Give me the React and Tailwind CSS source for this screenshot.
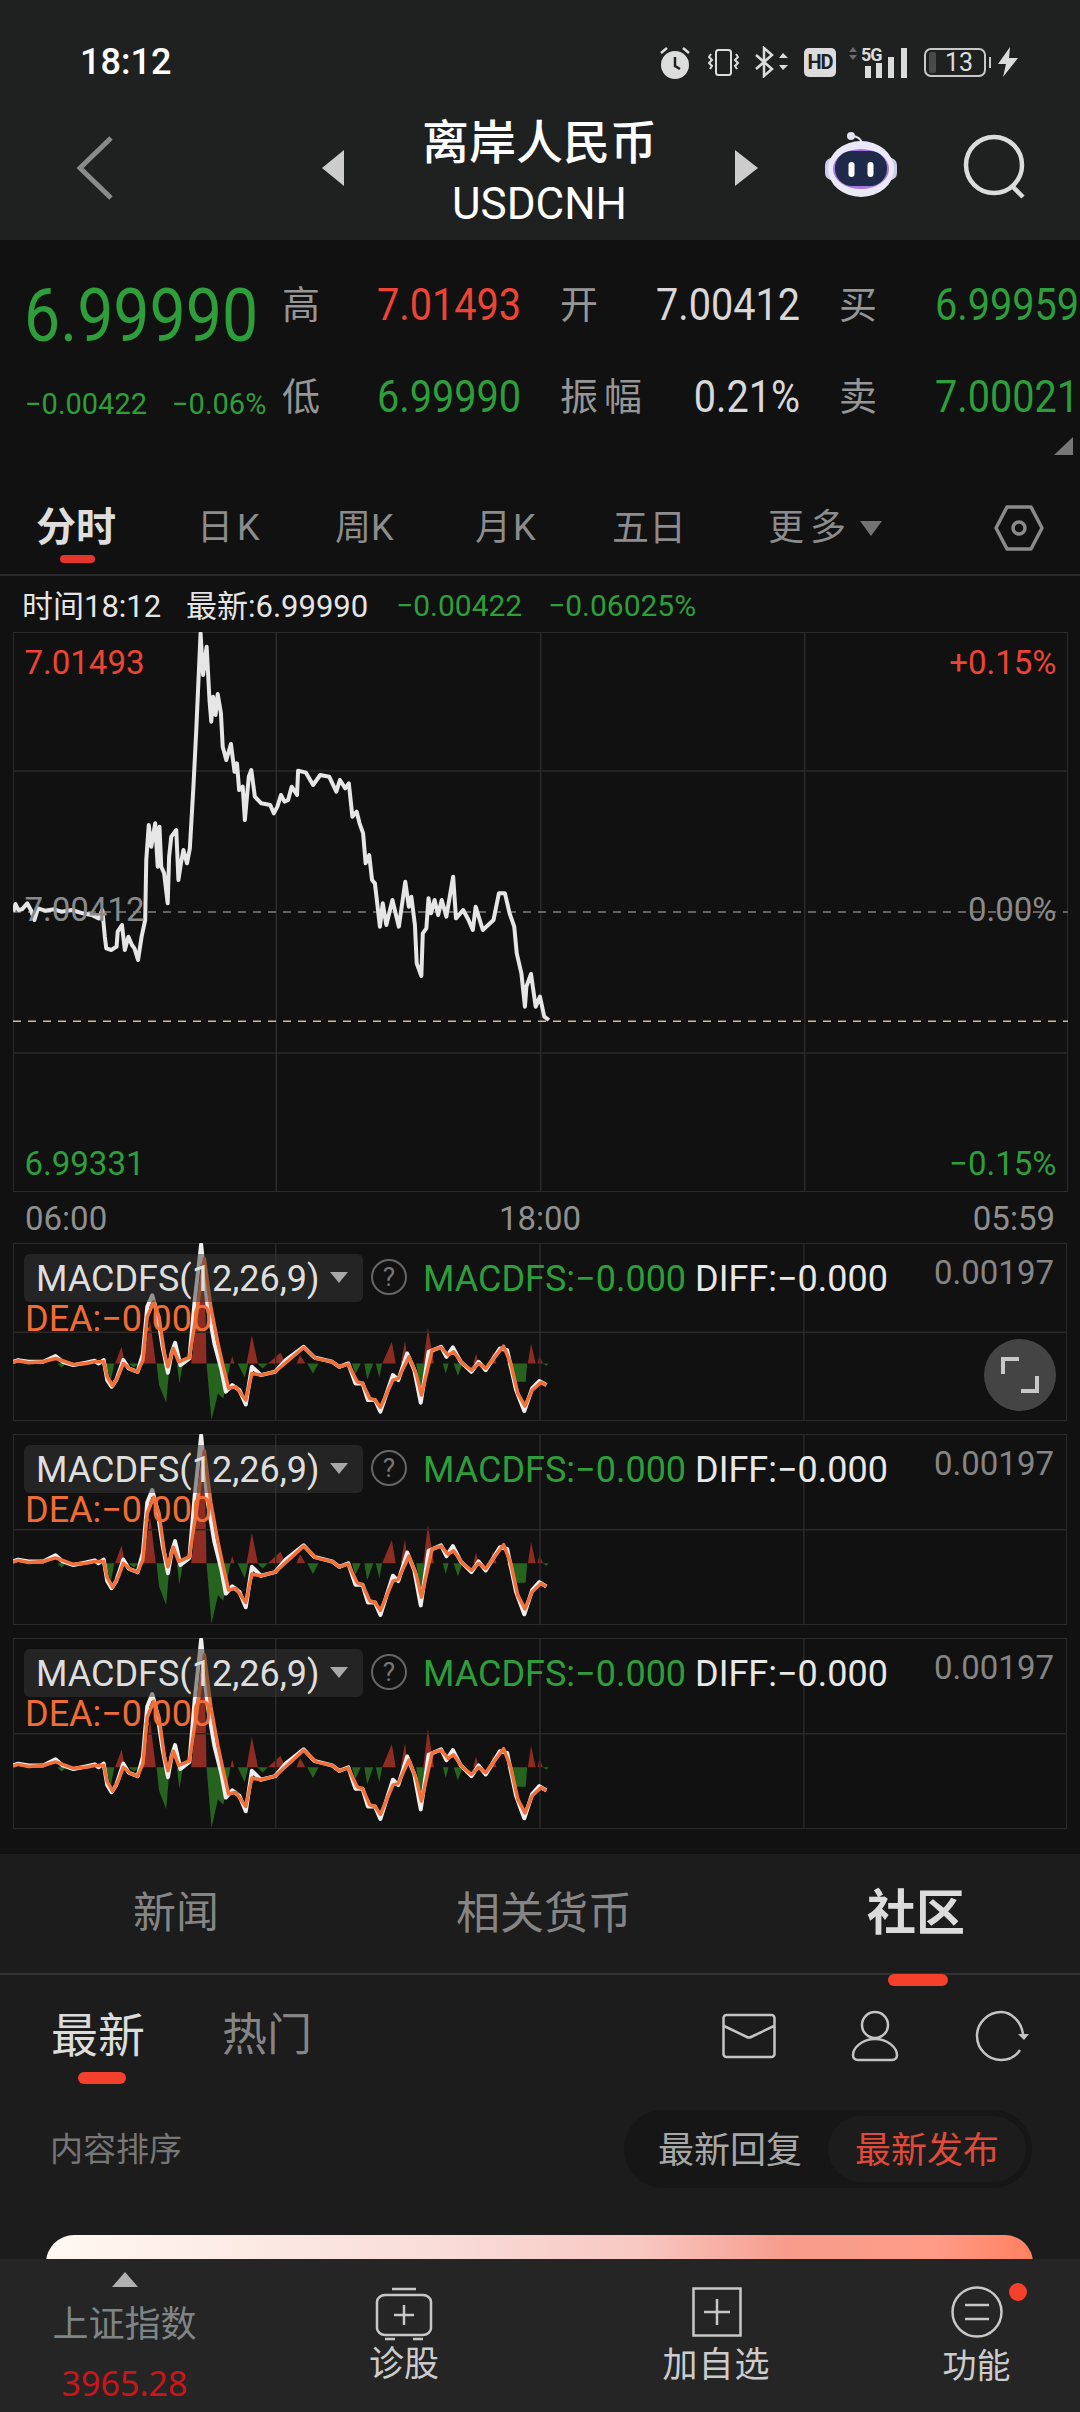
import React from 'react';

const FONT = "font-[Roboto,'Noto_Sans_CJK_SC',sans-serif]";

// traced from the reference, coordinates are 2.8x horizontally and 3x vertically
const PRICE_LINE = '36,875 42,852 50,870 60,868 75,850 85,870 95,900 105,865 125,872 150,868 170,875 200,870 230,880 255,885 275,895 285,870 292,950 296,985 310,990 325,980 328,935 340,915 348,990 358,950 368,975 375,985 385,1020 395,950 405,900 408,720 415,615 422,680 433,610 440,740 445,620 450,740 458,760 468,850 472,710 478,650 492,630 498,780 505,730 512,690 522,730 530,685 540,500 548,330 560,40 567,165 577,80 585,240 590,305 595,230 602,285 608,222 617,280 622,380 632,420 645,372 655,455 662,430 668,510 678,500 684,600 695,470 702,450 712,530 730,550 755,555 765,580 775,560 785,525 795,545 805,540 815,500 830,525 833,452 855,458 875,495 895,465 920,470 940,515 950,480 965,505 975,490 985,590 997,575 1005,610 1015,640 1022,730 1032,705 1040,780 1048,790 1062,920 1070,850 1080,915 1097,840 1115,920 1133,785 1143,860 1150,830 1160,915 1165,1030 1178,1068 1182,940 1192,925 1198,835 1205,880 1215,840 1225,885 1235,840 1248,890 1267,770 1275,895 1295,870 1310,900 1322,930 1330,860 1350,930 1380,900 1395,820 1412,820 1425,880 1438,920 1445,1000 1458,1060 1468,1160 1472,1100 1485,1062 1498,1160 1510,1130 1522,1190 1535,1200';
const MACD_WHITE = '36,425 50,420 80,425 120,425 155,408 175,425 205,435 240,428 265,422 275,430 290,420 300,480 312,500 325,480 345,420 360,445 385,455 400,400 412,260 426,225 440,280 455,380 470,458 480,400 490,368 505,435 530,415 545,240 563,72 580,250 600,370 620,450 632,515 650,495 670,510 688,553 705,440 730,465 770,455 800,420 850,380 880,412 930,425 950,440 975,430 995,490 1015,490 1030,540 1050,540 1065,575 1100,465 1115,480 1140,400 1160,450 1178,548 1200,395 1235,380 1250,410 1268,382 1290,425 1320,455 1340,425 1360,450 1400,385 1420,390 1445,510 1468,573 1490,505 1510,483 1530,495';
const MACD_ORANGE = '36,427 50,422 80,428 120,425 155,415 175,422 205,433 240,430 265,425 290,425 300,470 315,497 330,470 345,430 365,447 385,455 400,420 412,290 430,245 445,290 460,400 470,440 485,385 500,425 530,412 550,280 572,115 590,260 610,370 625,440 640,505 660,500 688,540 705,460 730,465 770,455 800,428 850,382 885,415 930,425 950,440 975,432 1000,485 1015,490 1035,535 1050,540 1065,562 1100,480 1115,475 1145,410 1165,460 1180,525 1210,390 1235,382 1255,405 1270,395 1295,430 1320,450 1340,430 1360,445 1410,378 1430,430 1450,520 1470,558 1490,510 1515,487 1530,495';
const HIST_RED = '322,430 340,380 350,430 400,430 420,300 436,430 535,430 572,115 578,430 645,430 650,408 656,430 690,430 705,345 722,430 750,430 785,398 800,430 830,430 840,405 855,430 1070,430 1097,365 1108,430 1122,430 1134,362 1142,430 1185,430 1198,322 1215,430 1325,430 1333,400 1340,430 1375,430 1380,395 1390,430 1478,430 1487,370 1500,430 1505,430 1511,405 1520,430';
const HIST_GREEN = '295,430 310,480 320,430 160,430 172,442 185,430 360,430 375,442 390,430 438,430 445,495 465,548 475,430 495,430 502,490 512,430 578,430 592,600 610,520 625,535 645,430 665,430 685,472 695,430 720,430 735,445 750,430 860,430 876,460 892,430 985,430 995,462 1010,430 1020,430 1028,478 1045,430 1052,430 1062,472 1070,430 1165,430 1178,505 1190,430 1240,430 1248,460 1256,430 1270,430 1282,467 1295,430 1420,430 1440,485 1472,485 1476,430 1520,430 1530,437 1536,430';

function Alarm() {
  return (
    <svg width="32" height="33" viewBox="0 0 32 33" className="ml-[659px] shrink-0">
      <circle cx="16" cy="19" r="14" fill="#dcdcdc" />
      <path d="M16 11v9l5 3" stroke="#1f2121" strokeWidth="2.5" fill="none" />
      <path d="M2 7l6-5M30 7l-6-5" stroke="#dcdcdc" strokeWidth="2.5" />
    </svg>
  );
}

function Vibrate() {
  return (
    <svg width="31" height="27" viewBox="0 0 31 27" fill="none" stroke="#dcdcdc" strokeWidth="2" className="ml-[17px] shrink-0">
      <rect x="8" y="1" width="15" height="25" rx="2.5" />
      <path d="M3 5l-2 3 3 3-3 3 3 3-2 3M28 5l2 3-3 3 3 3-3 3 2 3" />
    </svg>
  );
}

function Bluetooth() {
  return (
    <svg width="33" height="32" viewBox="0 0 33 32" className="ml-[16px] shrink-0">
      <path d="M1 9l16 14-8 7V2l8 7L1 23" fill="none" stroke="#dcdcdc" strokeWidth="2.5" />
      <path d="M24 12l4-5 5 5zM24 19l4 5 5-5z" fill="#dcdcdc" />
    </svg>
  );
}

function HdBadge() {
  return (
    <div className="ml-[16px] w-[32px] h-[29px] bg-[#dcdcdc] rounded-[5px] flex items-center justify-center text-[20px] leading-none font-bold text-[#1f2121] tracking-[-1px] shrink-0">HD</div>
  );
}

function Signal() {
  return (
    <div className="ml-[12px] w-[60px] h-[32px] relative shrink-0">
      <svg width="60" height="32" viewBox="0 0 60 32" className="absolute inset-0">
        <path d="M1 6l4-5 4 5zM1 9l4 5 4-5z" fill="#6b6b6b" />
        <rect x="17" y="20" width="6" height="12" fill="#dcdcdc" />
        <rect x="28" y="17" width="6" height="15" fill="#dcdcdc" />
        <rect x="40" y="11" width="6" height="21" fill="#dcdcdc" />
        <rect x="53" y="2" width="6" height="30" fill="#dcdcdc" />
      </svg>
      <span className="absolute left-[13px] top-0 text-[18px] leading-[18px] font-bold text-[#dcdcdc] tracking-[-1px]">5G</span>
    </div>
  );
}

function Battery() {
  return (
    <div className="ml-[16px] w-[67px] h-[29px] relative shrink-0">
      <div className="absolute left-0 top-0 w-[62px] h-[29px] border-2 border-[#c8c8c8] rounded-[7px] flex items-center">
        <div className="ml-[3px] w-[7px] h-[21px] bg-[#4a4a4a] rounded-[2px]" />
        <span className="w-[46px] text-center text-[25px] leading-none text-[#dcdcdc]">13</span>
      </div>
      <div className="absolute right-0 top-[9px] w-[2px] h-[11px] bg-[#c8c8c8]" />
    </div>
  );
}

function Bolt() {
  return (
    <svg width="20" height="30" viewBox="0 0 20 30" className="ml-[7px] shrink-0">
      <path d="M12 0L0 17h8l-3 13L20 11h-9z" fill="#dcdcdc" />
    </svg>
  );
}

function Robot() {
  return (
    <svg width="72" height="65" viewBox="0 0 72 65" className="shrink-0">
      <path d="M26 4c6 0 10 2 11 8" fill="none" stroke="#e5e3f2" strokeWidth="2" />
      <circle cx="26" cy="4" r="4" fill="#e5e3f2" />
      <rect x="0" y="26" width="72" height="22" rx="7" fill="#cfcce6" />
      <ellipse cx="36" cy="37" rx="33" ry="28" fill="#ebe9f7" />
      <ellipse cx="36" cy="37" rx="28" ry="20" fill="#a679e0" />
      <rect x="10" y="19" width="52" height="35" rx="17" fill="#1f2a4a" />
      <rect x="23.5" y="30" width="6" height="15" rx="3" fill="#ffffff" />
      <rect x="42.5" y="30" width="6" height="15" rx="3" fill="#ffffff" />
    </svg>
  );
}

function MainChart() {
  return (
    <svg viewBox="35 36 2953 1680" preserveAspectRatio="none" className="absolute inset-0 w-full h-full">
      <g fill="none">
        <rect x="35" y="36" width="2953" height="1680" stroke="#2b2b2b" strokeWidth="2" vectorEffect="non-scaling-stroke" />
        <path d="M772 36V1716M1512 36V1716M2251 36V1716M35 453H2988M35 1299H2988" stroke="#2a2a2a" strokeWidth="1.5" vectorEffect="non-scaling-stroke" />
        <path d="M35 876H2988" stroke="#7d7d7d" strokeWidth="1.5" strokeDasharray="8 7" vectorEffect="non-scaling-stroke" />
        <path d="M35 1204H2988" stroke="#d8bb90" strokeWidth="1.5" strokeDasharray="8 7" vectorEffect="non-scaling-stroke" />
        <polyline points={PRICE_LINE} stroke="#e6e6e6" strokeWidth="4" strokeLinejoin="round" vectorEffect="non-scaling-stroke" />
      </g>
    </svg>
  );
}

function MacdChart() {
  return (
    <svg viewBox="36 68 2952 535" preserveAspectRatio="none" className="absolute inset-0 w-full h-full">
      <polygon points={HIST_RED} fill="#8c2c22" />
      <polygon points={HIST_GREEN} fill="#25631f" />
      <g fill="none">
        <rect x="36" y="68" width="2952" height="535" stroke="#2b2b2b" strokeWidth="2" vectorEffect="non-scaling-stroke" />
        <path d="M772 68V603M1512 68V603M2251 68V603M36 336H2988" stroke="#2a2a2a" strokeWidth="1.5" vectorEffect="non-scaling-stroke" />
        <polyline points={MACD_WHITE} stroke="#eeeeee" strokeWidth="4" strokeLinejoin="round" vectorEffect="non-scaling-stroke" />
        <polyline points={MACD_ORANGE} stroke="#ef7038" strokeWidth="3.5" strokeLinejoin="round" vectorEffect="non-scaling-stroke" />
      </g>
    </svg>
  );
}

function MacdPanel({ className, expand }) {
  return (
    <div className={`relative mx-[13px] shrink-0 ${className}`}>
      <MacdChart />
      {/* LEGEND OVER THE CHART */}
      <div className="absolute left-[11px] top-[11px] w-[339px] h-[48px] rounded-[6px] bg-[#383838]/50 flex items-center pl-[12px] pt-[2px] text-[36px] leading-none text-[#dedede] whitespace-nowrap">
        MACDFS(12,26,9)
        <span className="absolute left-[306px] top-[18px] w-0 h-0 border-x-[9px] border-x-transparent border-t-[11px] border-t-[#a8a8a8]" />
      </div>
      <div className="absolute left-[358px] top-[16px] w-[36px] h-[36px] rounded-full border-2 border-[#666] text-[26px] leading-[32px] text-center text-[#777]">?</div>
      <span className="absolute left-[410px] top-[16px] text-[36px] leading-[40px] text-[#2e9e3a] whitespace-nowrap">MACDFS:−0.000</span>
      <span className="absolute left-[682px] top-[16px] text-[36px] leading-[40px] text-[#e8e8e8] whitespace-nowrap">DIFF:−0.000</span>
      <span className="absolute right-[13px] top-[11px] text-[33px] leading-[38px] text-[#858585]">0.00197</span>
      <span className="absolute left-[12px] top-[56px] text-[36px] leading-[40px] text-[#ef6c34] whitespace-nowrap">DEA:−0.000</span>
      {expand && (
        <div className="absolute left-[971px] top-[96px] w-[72px] h-[72px] rounded-full bg-[#444444] flex items-center justify-center">
          <svg width="38" height="38" viewBox="0 0 38 38" fill="none" stroke="#c8c8c8" strokeWidth="4">
            <path d="M2 18V3h16M36 20v15H20" />
          </svg>
        </div>
      )}
    </div>
  );
}

function Stat({ label, value, color }) {
  return (
    <div className="flex justify-between items-center h-[92px]">
      <span className="text-[38px] leading-[92px] text-[#969696] tracking-[6px] whitespace-nowrap">{label}</span>
      <span className={`text-[44px] leading-[92px] origin-right scale-x-[0.9] ${color}`}>{value}</span>
    </div>
  );
}

export default function App() {
  return (
    <div className={`${FONT} w-[1080px] h-[2412px] bg-[#111111] flex flex-col overflow-hidden select-none`}>

      {/* STATUS BAR + NAV HEADER */}
      <header className="h-[240px] bg-[#1f2121] pt-[12px] shrink-0">
        <div className="relative h-[100px] flex items-center">
          <span className="absolute left-[80px] top-[32px] text-[36px] leading-none font-medium text-white">18:12</span>
          <Alarm />
          <Vibrate />
          <Bluetooth />
          <HdBadge />
          <Signal />
          <Battery />
          <Bolt />
        </div>
        <div className="flex items-start h-[128px]">
          <svg width="36" height="64" viewBox="0 0 36 64" fill="none" stroke="#8a8a8a" strokeWidth="5" className="ml-[77px] mt-[24px] shrink-0">
            <path d="M34 2L3 32l31 30" />
          </svg>
          <div className="ml-[209px] mt-[38px] w-0 h-0 border-y-[18px] border-y-transparent border-r-[22px] border-r-[#cccccc]" />
          <div className="w-[391px] mt-[3px] flex flex-col items-center text-white">
            <span className="text-[47px] leading-[56px] font-medium whitespace-nowrap">离岸人民币</span>
            <span className="text-[44px] leading-[66px]">USDCNH</span>
          </div>
          <div className="mt-[38px] w-0 h-0 border-y-[18px] border-y-transparent border-l-[23px] border-l-[#cccccc]" />
          <div className="ml-[67px] mt-[20px]"><Robot /></div>
          <svg width="64" height="66" viewBox="0 0 64 66" fill="none" stroke="#dcdcdc" strokeWidth="4.5" className="ml-[65px] mt-[21px] shrink-0">
            <circle cx="32" cy="32" r="28" />
            <path d="M50 53l11 11" />
          </svg>
        </div>
      </header>

      {/* QUOTE BLOCK */}
      <section className="relative h-[240px] flex pt-[19px] shrink-0">
        <div className="w-[282px] shrink-0 pl-[24px]">
          <div className="text-[74px] leading-[92px] mt-[11px] text-[#2e9e3a] origin-left scale-x-[0.87]">6.99990</div>
          <div className="flex gap-[25px] text-[29px] leading-[36px] mt-[24px] ml-[1px] text-[#2e9e3a] whitespace-nowrap">
            <span>−0.00422</span>
            <span>−0.06%</span>
          </div>
        </div>
        <div className="grid grid-cols-[239px_240px_240px] gap-x-[39px] h-[184px]">
          <Stat label="高" value="7.01493" color="text-[#ee4433]" />
          <Stat label="开" value="7.00412" color="text-[#d8d8d8]" />
          <Stat label="买" value="6.99959" color="text-[#2e9e3a]" />
          <Stat label="低" value="6.99990" color="text-[#2e9e3a]" />
          <Stat label="振幅" value="0.21%" color="text-[#d8d8d8]" />
          <Stat label="卖" value="7.00021" color="text-[#2e9e3a]" />
        </div>
        <div className="absolute right-[7px] top-[197px] w-0 h-0 border-l-[19px] border-l-transparent border-b-[18px] border-b-[#777777]" />
      </section>

      {/* PERIOD TABS */}
      <nav className="h-[96px] border-b-2 border-[#2a2a2a] flex items-center pt-[2px] text-[36px] leading-none text-[#8c8c8c] shrink-0">
        <div className="relative ml-[36px] w-[82px] text-[40px] font-bold text-[#dedede] whitespace-nowrap">
          分时
          <div className="absolute left-[24px] top-[47px] w-[35px] h-[8px] rounded-full bg-[#e5352d]" />
        </div>
        <span className="ml-[79px] w-[61px] tracking-[4px] whitespace-nowrap">日K</span>
        <span className="ml-[77px] w-[63px] whitespace-nowrap">周K</span>
        <span className="ml-[77px] w-[62px] tracking-[2px] whitespace-nowrap">月K</span>
        <span className="ml-[75px] w-[73px] text-[37px] whitespace-nowrap">五日</span>
        <span className="ml-[83px] w-[80px] tracking-[6px] whitespace-nowrap">更多</span>
        <span className="ml-[12px] w-0 h-0 border-x-[11px] border-x-transparent border-t-[15px] border-t-[#737373]" />
        <svg width="50" height="46" viewBox="0 0 50 46" fill="none" stroke="#8a8a8a" strokeWidth="3.5" className="ml-[112px] shrink-0">
          <path d="M13 2h24l11 21-11 21H13L2 23z" strokeLinejoin="round" />
          <circle cx="25" cy="23" r="6" />
        </svg>
      </nav>

      {/* CROSSHAIR INFO ROW */}
      <div className="h-[56px] flex items-center pl-[22px] pt-[4px] text-[31px] leading-none whitespace-nowrap shrink-0">
        <span className="text-[#e5e5e5] w-[164px]">时间18:12</span>
        <span className="text-[#e5e5e5] w-[210px]">最新:6.99990</span>
        <span className="text-[#2e9e3a] text-[30px] w-[152px]">−0.00422</span>
        <span className="text-[#2e9e3a] text-[30px]">−0.06025%</span>
      </div>

      {/* INTRADAY CHART */}
      <div className="relative mx-[12.5px] h-[560px] shrink-0">
        <MainChart />
        <span className="absolute left-[12px] top-[11px] text-[33px] leading-[40px] text-[#ee4433]">7.01493</span>
        <span className="absolute right-[11px] top-[11px] text-[33px] leading-[40px] text-[#ee4433]">+0.15%</span>
        <span className="absolute left-[12px] top-[258px] text-[33px] leading-[40px] text-[#8a8a8a]">7.00412</span>
        <span className="absolute right-[11px] top-[258px] text-[33px] leading-[40px] text-[#8a8a8a]">0.00%</span>
        <span className="absolute left-[12px] top-[512px] text-[33px] leading-[40px] text-[#2e9e3a]">6.99331</span>
        <span className="absolute right-[11px] top-[512px] text-[33px] leading-[40px] text-[#2e9e3a]">−0.15%</span>
      </div>

      {/* TIME AXIS */}
      <div className="h-[51px] flex items-center justify-between px-[25px] pt-[2px] text-[33px] leading-none text-[#8f8f8f] shrink-0">
        <span>06:00</span>
        <span>18:00</span>
        <span>05:59</span>
      </div>

      {/* MACD PANELS */}
      <div className="flex flex-col gap-[13px] shrink-0">
        <MacdPanel className="h-[178px]" expand />
        <MacdPanel className="h-[191px]" />
        <MacdPanel className="h-[191px]" />
      </div>

      {/* COMMUNITY SECTION */}
      <section className="mt-[25px] h-[405px] bg-[#1c1c1c] overflow-hidden shrink-0 flex flex-col">
        <div className="h-[121px] border-b-2 border-[#333333] flex items-center text-[#858585] shrink-0">
          <span className="ml-[133px] w-[86px] text-[43px] leading-none whitespace-nowrap">新闻</span>
          <span className="ml-[237px] w-[176px] text-[44px] leading-none whitespace-nowrap">相关货币</span>
          <div className="relative ml-[235px] w-[98px] text-[49px] leading-none font-bold text-[#dcdcdc] whitespace-nowrap">
            社区
            <div className="absolute left-[21px] top-[85px] w-[60px] h-[12px] rounded-full bg-[#f5402c]" />
          </div>
        </div>

        <div className="h-[119px] flex items-center pt-[2px] shrink-0">
          <div className="relative ml-[51px] w-[96px] text-[47px] leading-none text-[#dcdcdc] whitespace-nowrap">
            最新
            <div className="absolute left-[27px] top-[60px] w-[48px] h-[12px] rounded-full bg-[#f5402c]" />
          </div>
          <span className="ml-[75px] w-[90px] text-[45px] leading-none text-[#858585] whitespace-nowrap">热门</span>
          <svg width="54" height="46" viewBox="0 0 54 46" fill="none" stroke="#c4c4c4" strokeWidth="2.5" className="ml-[410px] shrink-0">
            <rect x="1.500" y="2" width="51" height="42" rx="3" />
            <path d="M2 13l23 11c1.500.7 2.500.7 4 0l23-11" />
          </svg>
          <svg width="48" height="52" viewBox="0 0 48 52" fill="none" stroke="#c4c4c4" strokeWidth="2.5" className="ml-[75px] shrink-0">
            <circle cx="24" cy="15" r="13" />
            <path d="M24 29C11 29 2 38 2 45c0 3 2 5 5 5h34c3 0 5-2 5-5 0-7-9-16-22-16z" />
          </svg>
          <svg width="56" height="52" viewBox="0 0 56 52" fill="none" stroke="#c4c4c4" strokeWidth="2.5" className="ml-[76px] shrink-0">
            <path d="M48 24C46 11 36 2 26 2 13 2 2 13 2 26s11 24 24 24c8 0 15-4 19-10" />
            <path d="M43 24h11l-5 6z" fill="#c4c4c4" stroke="none" />
          </svg>
        </div>

        <div className="flex items-center h-[78px] pl-[50px] mt-[16px] shrink-0">
          <span className="w-[132px] text-[33px] leading-none text-[#777777] whitespace-nowrap">内容排序</span>
          <div className="ml-[442px] w-[408px] h-[78px] rounded-full bg-[#161616] flex items-center text-[36px] leading-none whitespace-nowrap">
            <span className="ml-[34px] w-[170px] pt-[4px] text-[#a8a8a8]">最新回复</span>
            <div className="w-[198px] h-[66px] pt-[4px] rounded-full bg-[#1c1c1c] flex items-center justify-center text-[#e04a38]">最新发布</div>
          </div>
        </div>

        <div className="mt-[47px] ml-[46px] w-[987px] h-[60px] rounded-t-[28px] bg-[linear-gradient(90deg,#fff8f2_0%,#f9dcd8_40%,#f8c8c2_60%,#f79c8c_75%,#ff9c88_90%,#ff8060_100%)] shrink-0" />
      </section>

      {/* BOTTOM BAR */}
      <footer className="flex-1 bg-[#252525] flex items-start relative">
        <div className="ml-[53px] w-[143px] flex flex-col items-center pt-[13px] shrink-0">
          <div className="w-0 h-0 border-x-[13px] border-x-transparent border-b-[15px] border-b-[#b0b0b0]" />
          <span className="mt-[18px] text-[36px] leading-[40px] text-[#7f8587] whitespace-nowrap">上证指数</span>
          <span className="mt-[18px] font-['Noto_Sans'] text-[34px] leading-[40px] text-[#c9161a]">3965.28</span>
        </div>

        <div className="ml-[173px] w-[70px] flex flex-col items-center pt-[28px] shrink-0">
          <svg width="58" height="54" viewBox="0 0 58 54" fill="none" stroke="#c8c8c8" strokeWidth="2.5">
            <path d="M17 2h24M10 8h38c4 0 8 3 8 7v26c0 4-4 7-8 7H10c-4 0-8-3-8-7V15c0-4 4-7 8-7zM10 52h10M38 52h10" />
            <path d="M29 18v20M19 28h20" />
          </svg>
          <span className="mt-[4px] text-[35px] leading-[40px] text-[#cccccc] whitespace-nowrap">诊股</span>
        </div>

        <div className="ml-[224px] w-[107px] flex flex-col items-center pt-[28px] shrink-0">
          <svg width="50" height="50" viewBox="0 0 50 50" fill="none" stroke="#c8c8c8" strokeWidth="2.5">
            <rect x="1.500" y="1.500" width="47" height="47" />
            <path d="M25 12v26M12 25h26" />
          </svg>
          <span className="mt-[8px] text-[35px] leading-[42px] text-[#cccccc] tracking-[1px] whitespace-nowrap">加自选</span>
        </div>

        <div className="ml-[173px] w-[67px] flex flex-col items-center pt-[27px] shrink-0">
          <svg width="52" height="52" viewBox="0 0 52 52" fill="none" stroke="#c8c8c8" strokeWidth="2.5">
            <circle cx="26" cy="26" r="24.500" />
            <path d="M14 19h24M14 33h24" />
          </svg>
          <span className="mt-[7px] text-[34px] leading-[42px] text-[#cccccc] whitespace-nowrap">功能</span>
        </div>
        <div className="absolute left-[1009px] top-[24px] w-[18px] h-[18px] rounded-full bg-[#f5402c]" />
      </footer>
    </div>
  );
}
